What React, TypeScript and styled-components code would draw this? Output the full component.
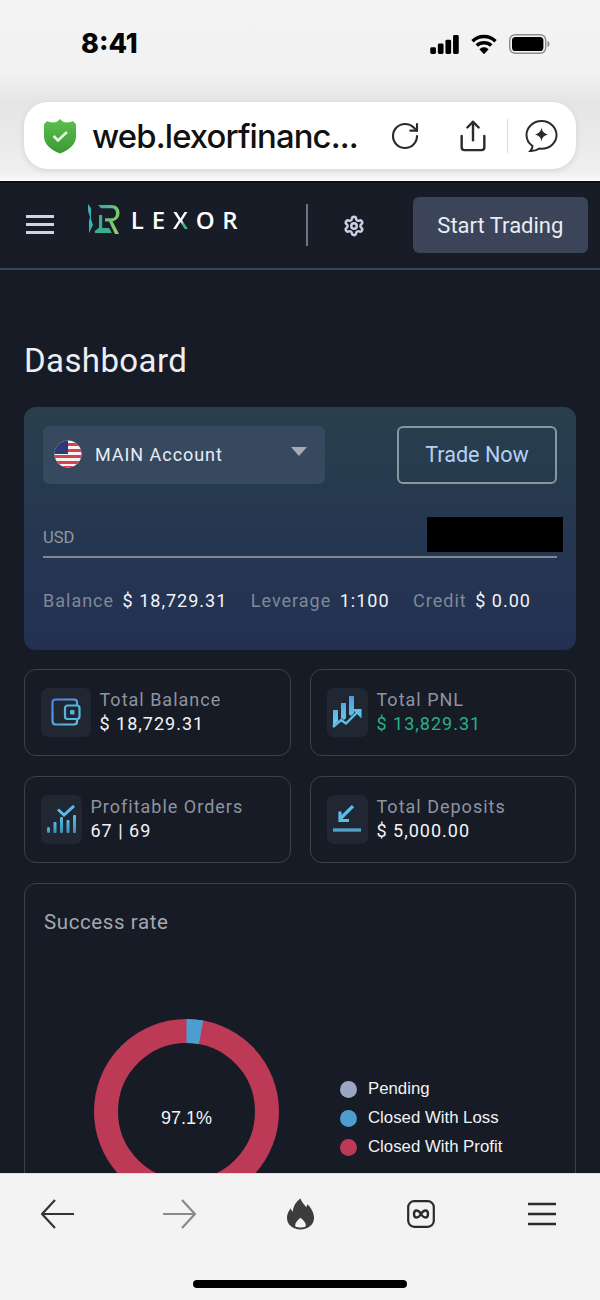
import styled, { createGlobalStyle } from 'styled-components'
import { RotateCw, Settings, Share } from 'lucide-react'

const Global = createGlobalStyle`
	html, body {
		margin: 0;
		padding: 0;
		background: #f2f2f2;
	}
	* {
		box-sizing: border-box;
	}
`

const Phone = styled.div`
	width: 600px;
	height: 1300px;
	display: flex;
	flex-direction: column;
	overflow: hidden;
	font-family: Roboto, 'Liberation Sans', sans-serif;
`

/* browser chrome, top */
const BrowserTop = styled.header`
	height: 183px;
	flex: none;
	padding: 0 24px;
	background: linear-gradient(#f3f3f3 0, #f2f2f2 70px, #e5e5e5 102px, #efefef 172px, #fafafa 181px);
	border-bottom: 2px solid #0c0f15;
	display: flex;
	flex-direction: column;
`
const StatusBar = styled.div`
	height: 102px;
	padding: 26px 26px 0 57px;
	display: flex;
	align-items: flex-start;
	justify-content: space-between;
`
const Clock = styled.span`
	font-family: Inter, 'Liberation Sans', sans-serif;
	font-size: 27px;
	line-height: 36px;
	font-weight: 800;
	color: #050505;
`
const StatusIcons = styled.div`
	display: flex;
	align-items: center;
	gap: 12px;
	height: 36px;
`
const UrlBar = styled.div`
	height: 67px;
	border-radius: 24px;
	background: #fff;
	box-shadow: 0 2px 6px rgba(0, 0, 0, 0.1);
	padding: 0 1px 0 19px;
	display: flex;
	align-items: center;
`
const UrlText = styled.span`
	font-family: Inter, 'Liberation Sans', sans-serif;
	font-size: 32.8px;
	font-weight: 500;
	letter-spacing: -0.85px;
	color: #111;
	margin-left: 15px;
	width: 279px;
	flex: none;
	white-space: nowrap;
`
const UrlAction = styled.span`
	width: 68px;
	flex: none;
	display: flex;
	justify-content: center;
	color: #2b2b2b;
`
const UrlDivider = styled.span`
	width: 1px;
	height: 34px;
	flex: none;
	margin-right: -1px;
	background: #dcdcdc;
`

/* site navbar */
const Navbar = styled.nav`
	height: 87px;
	flex: none;
	background: #171c27;
	border-bottom: 2px solid #33465c;
	padding: 0 12px 0 26px;
	display: flex;
	align-items: center;
`
const Burger = styled.div`
	width: 28px;
	display: flex;
	flex-direction: column;
	gap: 5px;
	margin-top: -3px;

	span {
		height: 3px;
		background: #cdd3e8;
	}
`
const Logo = styled.div`
	display: flex;
	align-items: center;
	margin-left: 34px;
	margin-top: -13px;
	width: 219px;
`
const LogoWord = styled.span`
	font-family: 'Open Sans', sans-serif;
	font-size: 24px;
	font-weight: 600;
	letter-spacing: 7.8px;
	color: #fff;
	margin-left: 11px;
`
const LogoX = styled.span`
	background: linear-gradient(125deg, #fff 45%, #3fb58a 55%);
	-webkit-background-clip: text;
	background-clip: text;
	color: transparent;
`
const NavDivider = styled.span`
	width: 2px;
	height: 42px;
	margin-top: -1px;
	background: #6d7481;
`
const Gear = styled.span`
	display: flex;
	color: #c8d0e4;
	margin-left: 35px;
	margin-right: 48px;
`
const StartButton = styled.button`
	width: 176px;
	height: 56px;
	margin-top: -1px;
	border: 0;
	border-radius: 6px;
	background: #3b4459;
	color: #e9edf5;
	font-family: inherit;
	font-size: 22px;
	font-weight: 400;
`

/* page content */
const Main = styled.main`
	flex: 1;
	min-height: 0;
	overflow: hidden;
	background: #161b26;
	padding: 71px 24px 0;
`
const Title = styled.h1`
	margin: 0 0 26px;
	font-size: 33px;
	line-height: 40px;
	font-weight: 400;
	letter-spacing: 0.4px;
	color: #eceef2;
`
const AccountCard = styled.section`
	height: 243px;
	border-radius: 12px;
	background: linear-gradient(#283f4c, #233054);
	padding: 19px 19px 0;
`
const AccountTop = styled.div`
	display: flex;
	justify-content: space-between;
`
const AccountSelect = styled.div`
	width: 282px;
	height: 58px;
	border-radius: 6px;
	background: #37495f;
	padding: 0 18px 2px 11px;
	display: flex;
	align-items: center;
	color: #e6edf6;
	font-size: 18px;
	font-weight: 400;
	letter-spacing: 0.95px;
`
const AccountName = styled.span`
	margin-left: 13px;
	flex: 1;
`
const Caret = styled.span`
	width: 0;
	height: 0;
	margin-top: -6px;
	border-left: 8px solid transparent;
	border-right: 8px solid transparent;
	border-top: 9px solid #a6acb1;
`
const TradeButton = styled.button`
	width: 160px;
	height: 58px;
	border: 2px solid #8796a1;
	border-radius: 6px;
	background: transparent;
	color: #b6d0f7;
	font-family: inherit;
	font-size: 21.6px;
	font-weight: 400;
	padding-bottom: 3px;
`
const UsdRow = styled.div`
	margin-top: 33px;
	height: 41px;
	border-bottom: 2px solid #7c8792;
	display: flex;
	justify-content: space-between;
	font-size: 16.5px;
	color: #8f98a4;
`
const UsdLabel = styled.span`
	align-self: flex-end;
	margin-bottom: 9px;
`
const Redacted = styled.span`
	width: 136px;
	height: 35px;
	margin-right: -6px;
	background: #000;
`
const InfoRow = styled.div`
	margin-top: 32px;
	display: flex;
	gap: 23.5px;
	font-size: 18px;
	line-height: 22px;
	letter-spacing: 1px;
`
const InfoItem = styled.span`
	display: flex;
	gap: 8.5px;
	white-space: nowrap;
`
const InfoLabel = styled.span`
	color: #7e8996;
`
const InfoValue = styled.span`
	color: #f2f4f7;
`
const StatGrid = styled.div`
	margin-top: 19px;
	display: grid;
	grid-template-columns: 267px 266px;
	justify-content: space-between;
	row-gap: 20px;
`
const StatCard = styled.div`
	height: 87px;
	border: 1.5px solid #3b404b;
	border-radius: 12px;
	padding: 0 15px 1px 15.5px;
	display: flex;
	align-items: center;
	gap: 9px;
`
const StatIcon = styled.span<{ $wide?: boolean }>`
	width: ${(p) => (p.$wide ? '50px' : '41px')};
	height: 49px;
	flex: none;
	border-radius: 7px;
	background: #212633;
	display: flex;
	align-items: center;
	justify-content: center;
`
const StatText = styled.div`
	display: flex;
	flex-direction: column;
	gap: 2px;
	letter-spacing: 1px;
	font-size: 18px;
	line-height: 22px;
`
const StatLabel = styled.span`
	color: #8e94a0;
`
const StatValue = styled.span<{ $green?: boolean }>`
	color: ${(p) => (p.$green ? '#27b184' : '#f2f4f7')};
`
const ChartCard = styled.section`
	margin-top: 20px;
	height: 400px;
	border: 1.5px solid #3b404b;
	border-radius: 12px;
	padding: 25px 19px;
`
const ChartTitle = styled.h2`
	margin: 0;
	font-size: 20.5px;
	line-height: 26px;
	font-weight: 400;
	letter-spacing: 0.6px;
	color: #a3a8b0;
`
const ChartRow = styled.div`
	margin-top: 84px;
	margin-left: 49.5px;
	display: flex;
	align-items: flex-start;
	gap: 61.5px;
`
const Legend = styled.ul`
	list-style: none;
	margin: 59px 0 0;
	padding: 0;
	display: flex;
	flex-direction: column;
	gap: 7px;
`
const LegendRow = styled.li`
	display: flex;
	align-items: center;
	gap: 11px;
	font-family: 'Liberation Sans', sans-serif;
	font-size: 16.8px;
	line-height: 22px;
	color: #f1f2f4;
`
const LegendDot = styled.span<{ $color: string }>`
	width: 17px;
	height: 17px;
	border-radius: 50%;
	background: ${(p) => p.$color};
`

/* browser chrome, bottom */
const BrowserBottom = styled.footer`
	height: 127px;
	flex: none;
	background: #f3f3f3;
	border-top: 1px solid #dedede;
`
const ToolBar = styled.div`
	height: 80px;
	display: grid;
	grid-template-columns: repeat(5, 121px);
	justify-content: center;
	align-items: center;
	justify-items: center;
`
const HomeBar = styled.div`
	width: 214px;
	height: 8px;
	margin: 26px auto 0;
	border-radius: 4px;
	background: #000;
`

const FooterIcon = styled.span<{ $muted?: boolean }>`
	display: flex;
	color: ${(p) => (p.$muted ? '#8a8a8a' : '#333')};
`

const SignalIcon = () => (
	<svg width="29" height="19" viewBox="0 0 30 20" fill="#000">
		<rect x="0" y="13" width="6" height="7" rx="1.5" />
		<rect x="8" y="9" width="6" height="11" rx="1.5" />
		<rect x="16" y="5" width="6" height="15" rx="1.5" />
		<rect x="24" y="0" width="6" height="20" rx="1.5" />
	</svg>
)

const WifiIcon = () => (
	<svg width="26" height="20" viewBox="0 0 26 20" fill="none" stroke="#000" strokeWidth="3.4">
		<path d="M1.5 7.2C8 1 18 1 24.5 7.2" />
		<path d="M5.8 11.6c4-3.8 10.4-3.8 14.4 0" />
		<path d="M9.8 15.4c1.8-1.6 4.6-1.6 6.4 0L13 18.8z" fill="#000" strokeWidth="2" />
	</svg>
)

const BatteryIcon = () => (
	<svg width="41" height="20" viewBox="0 0 41 20">
		<rect x="0.7" y="0.7" width="36" height="18.6" rx="5.5" fill="none" stroke="#8b8b8b" strokeWidth="1.4" />
		<rect x="3" y="3" width="31.4" height="14" rx="3.6" fill="#000" />
		<path d="M38.5 7v6c1.4-.4 2-1.6 2-3s-.6-2.600-2-3z" fill="#8b8b8b" />
	</svg>
)

const ShieldIcon = () => (
	<svg width="34" height="36" viewBox="0 0 34 36" style={{ flex: 'none' }}>
		<defs>
			<linearGradient id="shield" x1="0" y1="0" x2="0" y2="1">
				<stop offset="0" stopColor="#5cc04e" />
				<stop offset="1" stopColor="#3a9a32" />
			</linearGradient>
		</defs>
		<path
			d="M17 1c2 2.500 4 3.500 7 3.500 2.500 0 5-1 6-1.500l3 3.500v12C33 27 25 32.500 17 35.500 9 32.500 1 27 1 18.500v-12L4 3c1 .5 3.500 1.500 6 1.500 3 0 5-1 7-3.500z"
			fill="url(#shield)"
		/>
		<path d="M10.500 18l4.500 4.500 9-8.500" fill="none" stroke="#e4f6e2" strokeWidth="2.600" />
	</svg>
)

const ChatSparkIcon = () => (
	<svg width="33" height="34" viewBox="0 0 33 34" fill="none" stroke="#2b2b2b" strokeWidth="2">
		<path d="M16.500 2C8 2 1.500 8.500 1.500 16c0 4.500 2.500 8.500 6 11 0 2-.8 3.500-2.200 5 3.500.2 7-1 9-2.500 .7.100 1.500.2 2.200.2C25 29.700 31.500 23.500 31.500 16S25 2 16.500 2z" />
		<path d="M16.500 8.500c.8 4.200 2.300 5.800 6.500 7-4.200 1.200-5.700 2.800-6.500 7-.8-4.200-2.300-5.800-6.500-7 4.200-1.200 5.700-2.800 6.500-7z" fill="#2b2b2b" stroke="none" />
	</svg>
)

const LogoMark = () => (
	<svg width="32" height="31" viewBox="0 0 32 31">
		<defs>
			<linearGradient id="mark" x1="0" y1="0" x2="1" y2="0.6">
				<stop offset="0" stopColor="#2fa9a8" />
				<stop offset="1" stopColor="#8fd05c" />
			</linearGradient>
		</defs>
		<path d="M0 0l3 4v11l2 6-4 8 0-12 1-4-2-6z" fill="#38b3ad" />
		<path d="M10 1h13c6 0 8.500 3.500 8.500 8 0 4.500-3 7.500-7 8.300L31 30h-4l-6-12.500h-4v-3.200h6.500c3 0 4.500-2 4.500-5s-1.500-5-4.500-5H13z" fill="url(#mark)" />
		<path d="M11 11h3.200v13h7l2.500 5H7l-.5-1.500 4.500-4z" fill="#3cae8e" />
	</svg>
)

const WalletIcon = () => (
	<svg width="30" height="28" viewBox="0 0 30 28" fill="none" strokeWidth="2.200">
		<defs>
			<linearGradient id="wallet" x1="0" y1="0" x2="1" y2="1">
				<stop offset="0" stopColor="#4a7fe8" />
				<stop offset="1" stopColor="#5ec3dd" />
			</linearGradient>
		</defs>
		<path d="M26 8V4.500C26 2.500 24.500 1.500 23 1.500H4.500c-2 0-3 1.300-3 3v18.500c0 2 1 3.500 3 3.500H23c1.500 0 3-1 3-3v-2.500" stroke="url(#wallet)" />
		<rect x="14" y="7.500" width="14.500" height="13.500" rx="2.500" stroke="#56b7dc" />
		<rect x="19" y="12" width="4.500" height="4.500" rx="1" fill="#56b7dc" />
	</svg>
)

const PnlIcon = () => (
	<svg width="30" height="32" viewBox="0 0 30 32">
		<defs>
			<linearGradient id="pnl" x1="0" y1="0" x2="0" y2="1">
				<stop offset="0" stopColor="#4a9ae8" />
				<stop offset="1" stopColor="#6fd0e6" />
			</linearGradient>
		</defs>
		<path d="M1 14h5v11l-5 5zM9 7h5v15l-2 2-3-2zM17 0h5v17l-3 3-2-1.500z" fill="url(#pnl)" />
		<path d="M1 31l8-7 5 3.500 12-12" fill="none" stroke="#5cc0e4" strokeWidth="2.400" />
		<path d="M20 13h9.500v9.500z" fill="#5cc0e4" />
	</svg>
)

const OrdersIcon = () => (
	<svg width="29" height="28" viewBox="0 0 29 28">
		<defs>
			<linearGradient id="orders" x1="0" y1="0" x2="0" y2="1">
				<stop offset="0" stopColor="#58bde6" />
				<stop offset="1" stopColor="#3f8fb0" />
			</linearGradient>
		</defs>
		<g fill="url(#orders)">
			<rect x="0" y="22" width="3" height="6" rx="1.500" />
			<rect x="6.500" y="17" width="3" height="11" rx="1" />
			<rect x="13" y="12" width="3" height="16" rx="1" />
			<rect x="19.500" y="15" width="3" height="13" rx="1" />
			<rect x="26" y="10" width="3" height="18" rx="1" />
		</g>
		<path d="M11 4.500l6 5.500L27 1" fill="none" stroke="#58bde6" strokeWidth="3" />
	</svg>
)

const DepositIcon = () => (
	<svg width="30" height="28" viewBox="0 0 30 28" fill="none" stroke="#5cbce8">
		<path d="M21 1L8 14" strokeWidth="3.200" />
		<path d="M8 6.500v9h9" strokeWidth="3.200" />
		<path d="M1 25h28" strokeWidth="3.400" stroke="#4f9fc6" />
	</svg>
)

const FlagIcon = () => (
	<svg width="28" height="28" viewBox="0 0 28 28">
		<defs>
			<clipPath id="flag">
				<circle cx="14" cy="14" r="13.500" />
			</clipPath>
		</defs>
		<g clipPath="url(#flag)">
			<rect width="28" height="28" fill="#f4f4f6" />
			{[3, 9, 15, 21, 26].map((y) => (
				<rect key={y} x="0" y={y} width="28" height="3" fill="#d8404a" />
			))}
			<rect x="0" y="0" width="14" height="14" fill="#2d3a78" />
		</g>
	</svg>
)

const BackIcon = ({ flip }: { flip?: boolean }) => (
	<svg width="34" height="30" viewBox="0 0 34 30" fill="none" stroke="currentColor" strokeWidth="2.200">
		{flip ? <path d="M1 15h31M20 1l13 14-13 14" /> : <path d="M33 15H2M14 1L1 15l13 14" />}
	</svg>
)

const FlameIcon = () => (
	<svg width="29" height="32" viewBox="0 0 30 32" fill="#3c3c3c">
		<path d="M15 0c1 4 4 6 6 9 .6-1 .9-2 1-3 4 3.500 7 9 7 14 0 7-6 12-14 12S1 27 1 20c0-4 1.500-7 4-10 .3 1.500 1 2.800 2 3.500C7.500 8 10.500 3 15 0zm0 20c-3 2.500-5.500 5-5.500 7.500 0 .5 0 1 .2 1.500 1.500.8 3.300 1 5.300 1s3.800-.2 5.300-1c.2-.5.2-1 .2-1.500 0-2.500-2.500-5-5.500-7.500z" fillRule="evenodd" />
	</svg>
)

const TabsIcon = () => (
	<svg width="28" height="28" viewBox="0 0 28 28" fill="none" stroke="#2b2b2b">
		<rect x="1.200" y="1.200" width="25.600" height="25.600" rx="6" strokeWidth="2.200" />
		<path d="M14 14c-1.500-2.500-3-3.500-4.500-3.500S7 12 7 14s1 3.500 2.500 3.500S12.500 16.500 14 14s3-3.500 4.500-3.500S21 12 21 14s-1 3.500-2.500 3.500S15.500 16.500 14 14z" strokeWidth="2.400" />
	</svg>
)

const MenuIcon = () => (
	<svg width="28" height="24" viewBox="0 0 28 24" fill="none" stroke="#2b2b2b" strokeWidth="2.400">
		<path d="M0 2h28M0 12h28M0 22h28" />
	</svg>
)

const Donut = () => {
	const c = 92.5
	const r = 80.5
	const circ = 2 * Math.PI * r
	const loss = 0.029
	return (
		<svg width="185" height="185" viewBox="0 0 185 185">
			<circle cx={c} cy={c} r={r} fill="none" stroke="#bc3a55" strokeWidth="24" />
			<circle
				cx={c}
				cy={c}
				r={r}
				fill="none"
				stroke="#4d9dd0"
				strokeWidth="24"
				strokeDasharray={`${circ * loss} ${circ}`}
				transform={`rotate(-90 ${c} ${c})`}
			/>
			<text x={c} y="105" textAnchor="middle" fontFamily="Liberation Sans, sans-serif" fontSize="18" fill="#f4f4f6">
				97.1%
			</text>
		</svg>
	)
}

const App = () => (
	<Phone>
		<Global />
		<BrowserTop>
			<StatusBar>
				<Clock>8:41</Clock>
				<StatusIcons>
					<SignalIcon />
					<WifiIcon />
					<BatteryIcon />
				</StatusIcons>
			</StatusBar>
			<UrlBar>
				<ShieldIcon />
				<UrlText>web.lexorfinanc...</UrlText>
				<UrlAction>
					<RotateCw size={32} strokeWidth={1.6} />
				</UrlAction>
				<UrlAction>
					<Share size={34} strokeWidth={1.7} />
				</UrlAction>
				<UrlDivider />
				<UrlAction>
					<ChatSparkIcon />
				</UrlAction>
			</UrlBar>
		</BrowserTop>

		<Navbar>
			<Burger>
				<span />
				<span />
				<span />
			</Burger>
			<Logo>
				<LogoMark />
				<LogoWord>
					LE<LogoX>X</LogoX>OR
				</LogoWord>
			</Logo>
			<NavDivider />
			<Gear>
				<Settings size={22} strokeWidth={2.7} />
			</Gear>
			<StartButton>Start Trading</StartButton>
		</Navbar>

		<Main>
			<Title>Dashboard</Title>
			<AccountCard>
				<AccountTop>
					<AccountSelect>
						<FlagIcon />
						<AccountName>MAIN Account</AccountName>
						<Caret />
					</AccountSelect>
					<TradeButton>Trade Now</TradeButton>
				</AccountTop>
				<UsdRow>
					<UsdLabel>USD</UsdLabel>
					<Redacted />
				</UsdRow>
				<InfoRow>
					<InfoItem>
						<InfoLabel>Balance</InfoLabel>
						<InfoValue>$ 18,729.31</InfoValue>
					</InfoItem>
					<InfoItem>
						<InfoLabel>Leverage</InfoLabel>
						<InfoValue>1:100</InfoValue>
					</InfoItem>
					<InfoItem>
						<InfoLabel>Credit</InfoLabel>
						<InfoValue>$ 0.00</InfoValue>
					</InfoItem>
				</InfoRow>
			</AccountCard>

			<StatGrid>
				<StatCard>
					<StatIcon $wide>
						<WalletIcon />
					</StatIcon>
					<StatText>
						<StatLabel>Total Balance</StatLabel>
						<StatValue>$ 18,729.31</StatValue>
					</StatText>
				</StatCard>
				<StatCard>
					<StatIcon>
						<PnlIcon />
					</StatIcon>
					<StatText>
						<StatLabel>Total PNL</StatLabel>
						<StatValue $green>$ 13,829.31</StatValue>
					</StatText>
				</StatCard>
				<StatCard>
					<StatIcon>
						<OrdersIcon />
					</StatIcon>
					<StatText>
						<StatLabel>Profitable Orders</StatLabel>
						<StatValue>67 | 69</StatValue>
					</StatText>
				</StatCard>
				<StatCard>
					<StatIcon>
						<DepositIcon />
					</StatIcon>
					<StatText>
						<StatLabel>Total Deposits</StatLabel>
						<StatValue>$ 5,000.00</StatValue>
					</StatText>
				</StatCard>
			</StatGrid>

			<ChartCard>
				<ChartTitle>Success rate</ChartTitle>
				<ChartRow>
					<Donut />
					<Legend>
						<LegendRow>
							<LegendDot $color="#9ba7c2" />
							Pending
						</LegendRow>
						<LegendRow>
							<LegendDot $color="#4d9dd0" />
							Closed With Loss
						</LegendRow>
						<LegendRow>
							<LegendDot $color="#bc3a55" />
							Closed With Profit
						</LegendRow>
					</Legend>
				</ChartRow>
			</ChartCard>
		</Main>

		<BrowserBottom>
			<ToolBar>
				<FooterIcon>
					<BackIcon />
				</FooterIcon>
				<FooterIcon $muted>
					<BackIcon flip />
				</FooterIcon>
				<FlameIcon />
				<TabsIcon />
				<MenuIcon />
			</ToolBar>
			<HomeBar />
		</BrowserBottom>
	</Phone>
)

export default App
